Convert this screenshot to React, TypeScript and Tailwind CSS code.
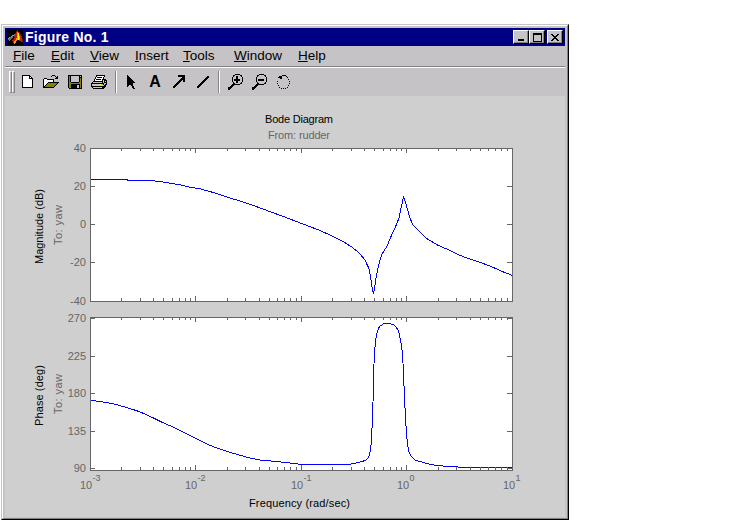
import React from 'react';

const PALETTE: Record<string, string> = {
  k: '#000000',
  w: '#ffffff',
  g: '#848284',
  l: '#c6c3c6',
  o: '#848200',
  y: '#ffff9c',
  Y: '#ffff00',
  r: '#c62000',
  d: '#7b1000',
  a: '#ff9a00',
  b: '#5a7184',
  c: '#94a6ad',
};

const MATLAB = [
  'kkkkkkkkkkkkkkkk',
  'kkkkkkkkkkdkkkkk',
  'kkkkkkkkkdrkkkkk',
  'kkkkkkkkkrardkkk',
  'kkkkkkkkdraYrkkk',
  'kkkkkkkbrraYrdkk',
  'kkkkkccbrraYrrkk',
  'kkkkcbkdrraYarrk',
  'kkcbbbkdrraYardk',
  'kcbbbkkrraaYarrk',
  'kbbbkkdrraaYarrd',
  'kkbkkrrraakkrrrd',
  'kkkkkkraakkkkkrd',
  'kkkkkkraakkkkkkk',
  'kkkkkkkakkkkkkkk',
  'kkkkkkkkkkkkkkkk',
];

const NEW_FILE = [
  'kkkkkkkk...',
  'kwwwwwwkk..',
  'kwwwwwwkwk.',
  'kwwwwwwkkkk',
  'kwwwwwwwwwk',
  'kwwwwwwwwwk',
  'kwwwwwwwwwk',
  'kwwwwwwwwwk',
  'kwwwwwwwwwk',
  'kwwwwwwwwwk',
  'kwwwwwwwwwk',
  'kwwwwwwwwwk',
  'kkkkkkkkkkk',
];

const OPEN_FILE = [
  '.........kkk....',
  '........k...k.k.',
  '.............kk.',
  '.kkk........kkk.',
  'kywykkkkkkk.....',
  'kwywywywywk.....',
  'kywywywywyk.....',
  'kwywykkkkkkkkkkk',
  'kywykoooooooook.',
  'kwykoooooooook..',
  'kykoooooooook...',
  'kkoooooooook....',
  'kkkkkkkkkkk.....',
];

const SAVE = [
  'kkkkkkkkkkkkkk',
  'kokllllllllklk',
  'kokllllllllkkk',
  'kokllllllllkok',
  'kokllllllllkok',
  'kokllllllllkok',
  'kokllllllllkok',
  'kookkkkkkkkook',
  'kooooooooooook',
  'kookkkkkkkkkok',
  'kookkkkkkllkok',
  'kookkkkkkllkok',
  'kookkkkkkllkok',
  '.kkkkkkkkkkkkk',
];

const PRINT = [
  '.....kkkkkkkkk..',
  '.....kwwwwwwwk..',
  '....kwkkkkkwk...',
  '....kwwwwwwwk...',
  '...kwkkkkkwkkkk.',
  '...kwwwwwwwklkkk',
  '..kkkkkkkkkklklk',
  '.klllllllllklkkk',
  'kkkkkkkkkkkkkllk',
  'klllllllYYllklkk',
  'kllllllllllllkk.',
  'kkkkkkkkkkkkkkk.',
  '.klllllllllkkk..',
  '..kkkkkkkkkkk...',
];

const POINTER = [
  'k.......',
  'kk......',
  'kkk.....',
  'kkkk....',
  'kkkkk...',
  'kkkkkk..',
  'kkkkkkk.',
  'kkkkkkkk',
  'kkkkkk..',
  'kkkkkk..',
  'kk..kk..',
  'k....kk.',
  '.....kk.',
  '......kk',
];

const ARROW = [
  '.....kkkkkkk',
  '.....kkkkkkk',
  '.........kkk',
  '........kkkk',
  '.......kkkkk',
  '......kkk.kk',
  '.....kkk..kk',
  '....kkk.....',
  '...kkk......',
  '..kkk.......',
  '.kkk........',
  'kkk.........',
  'kk..........',
];

const LINE = [
  '..........kk',
  '.........kkk',
  '........kkk.',
  '.......kkk..',
  '......kkk...',
  '.....kkk....',
  '....kkk.....',
  '...kkk......',
  '..kkk.......',
  '.kkk........',
  'kkk.........',
  'kk..........',
];

const ZOOM_IN = [
  '.......kkkkk...',
  '.....kk.....kk.',
  '.....k..kk...k.',
  '....k...kk....k',
  '....k...kk....k',
  '....k.kkkkkk..k',
  '....k.kkkkkk..k',
  '....k...kk....k',
  '.....k..kk...k.',
  '.....kk.....kk.',
  '....kkkkkkkk...',
  '...kkk.........',
  '..kkk..........',
  'kkkk...........',
  'kkk............',
  'kk.............',
];

const ZOOM_OUT = [
  '.......kkkkk...',
  '.....kk.....kk.',
  '.....k.......k.',
  '....k.........k',
  '....k.........k',
  '....k.kkkkkk..k',
  '....k.kkkkkk..k',
  '....k.........k',
  '.....k.......k.',
  '.....kk.....kk.',
  '....kkkkkkkk...',
  '...kkk.........',
  '..kkk..........',
  'kkkk...........',
  'kkk............',
  'kk.............',
];

const ROTATE = [
  '.....kkkk....',
  '..kkk....k...',
  '.kkkk.....k..',
  '...kk........',
  '...........k.',
  '.............',
  'k...........k',
  '.............',
  'k...........k',
  '.............',
  '.k.........k.',
  '.............',
  '..k.......k..',
  '....k.k.k....',
];

const MINIMIZE = ['......', '......', '......', '......', '......', '......', 'kkkkkk', 'kkkkkk'];

const MAXIMIZE = [
  'kkkkkkkkk',
  'kkkkkkkkk',
  'k.......k',
  'k.......k',
  'k.......k',
  'k.......k',
  'k.......k',
  'k.......k',
  'kkkkkkkkk',
];

const CLOSE = ['kk....kk', '.kk..kk.', '..kkkk..', '...kk...', '..kkkk..', '.kk..kk.', 'kk....kk'];

const PixelIcon: React.FC<{ rows: string[] }> = ({ rows }) => (
  <svg width={rows[0].length} height={rows.length} shapeRendering="crispEdges" className="block shrink-0">
    {rows.map((row, y) =>
      [...row].map((c, x) =>
        c === '.' ? null : <rect key={`${x}-${y}`} x={x} y={y} width={1} height={1} fill={PALETTE[c]} />
      )
    )}
  </svg>
);

const ToolButton: React.FC<{ label: string; children: React.ReactNode }> = ({ label, children }) => (
  <button aria-label={label} className="flex h-6 w-6 items-center justify-center">
    {children}
  </button>
);

const ToolSeparator: React.FC = () => <div className="h-[22px] w-0.5 border-l border-r border-l-[#848284] border-r-white" />;

const WindowButton: React.FC<{ label: string; children: React.ReactNode }> = ({ label, children }) => (
  <button
    aria-label={label}
    className="flex h-3.5 w-4 items-center justify-center border border-t-white border-r-black border-b-black border-l-white bg-[#c6c3c6] shadow-[inset_-1px_-1px_0_#848284]"
  >
    {children}
  </button>
);

const MENUS = ['File', 'Edit', 'View', 'Insert', 'Tools', 'Window', 'Help'];

// plot geometry, in window coordinates
const LEFT = 90;
const RIGHT = 512;
const DECADE = (RIGHT - LEFT) / 4;

const MAGNITUDE =
  '90,179.5 127,179.5 128,180.5 149,180.5 160,181.5 168,182.8 180,184.8 190,187.3 200,188.8 215,193 230,198 240,201 256.7,206.7 273,212.7 290,219 303,224 318,229.7 333,236.3 345,242.7 351.7,247 359,252.7 365,260 369,268.7 370.7,278 372,287 373.5,293.7 374.5,289 376,278 378.3,266.7 380,260 382,254 386.7,246.7 391.7,235 396.7,224 399,218 401,208 403.5,197.2 405.3,201.7 407.7,210 409.7,217.7 413,224.7 418,230.3 427,238.7 438,245.3 446.7,249 456.7,254 466.7,258 480,262.3 493,267.3 501.7,271.3 512,275.3';

const PHASE =
  '90,400.4 100,401.5 108,402.7 116.7,404.7 128,408 136.7,410.7 145,414 155,418.7 163,422.7 173,427 183,432 195,438 206.7,444 216.7,448 226.7,451.3 238,454.7 250,458 260,460 278,461.7 290,463 301.7,464.4 349,464.4 356,463 361.7,461.7 366.7,459.7 369.3,455.7 370.7,448 371.7,438 372.3,420 372.8,413 373.5,375 374.5,353 375.7,340 377.3,332 379.3,326.7 383.3,323.9 389,323.4 394,325 397.3,328.7 399,332.7 401,343 402.5,353 403.5,373 404.5,398 405.5,416.7 406.5,435 407.7,445 409,452 411.7,457 415,460 421.7,462 431.7,464.7 443,466 463,467.3 512,467.5';

interface PlotProps {
  top: number;
  bottom: number;
  ticks: [string, number][];
  curve: string;
}

const Plot: React.FC<PlotProps> = ({ top, bottom, ticks, curve }) => {
  const minor: number[] = [];
  for (let d = 0; d < 4; d++) {
    for (let n = 2; n < 10; n++) minor.push(Math.floor(LEFT + DECADE * (d + Math.log10(n))) + 0.5);
  }
  const major = [1, 2, 3].map((d) => Math.floor(LEFT + DECADE * d) + 0.5);

  return (
    <g>
      <rect x={LEFT} y={top} width={RIGHT - LEFT + 1} height={bottom - top + 1} fill="#fff" />
      <polyline points={curve} fill="none" stroke="#0000ff" shapeRendering="crispEdges" />
      <g stroke="#666" fill="none" shapeRendering="crispEdges">
        <rect x={LEFT + 0.5} y={top + 0.5} width={RIGHT - LEFT} height={bottom - top} />
        {minor.map((x) => (
          <path key={x} d={`M${x} ${top}v3M${x} ${bottom + 1}v-4`} />
        ))}
        {major.map((x) => (
          <path key={x} d={`M${x} ${top}v5M${x} ${bottom + 1}v-6`} />
        ))}
        {ticks.map(([label, y]) => (
          <path key={label} d={`M${LEFT} ${y + 0.5}h5M${RIGHT + 1} ${y + 0.5}h-6`} />
        ))}
      </g>
      {ticks.map(([label, y]) => (
        <text key={label} x={86} y={y + 4} textAnchor="end" fill="#666">
          {label}
        </text>
      ))}
    </g>
  );
};

const EXPONENTS: [string, number][] = [
  ['-3', 80],
  ['-2', 185],
  ['-1', 291],
  ['0', 397],
  ['1', 503],
];

const BodeDiagram: React.FC = () => (
  <svg viewBox="5 96 560 421" width={560} height={421} fontSize={11} className="block bg-[#cfcfcf]">
    <text x={265} y={123} textLength={68}>Bode Diagram</text>
    <text x={268} y={139} textLength={62} fill="#666">From: rudder</text>

    <Plot
      top={148}
      bottom={301}
      ticks={[['40', 148], ['20', 186], ['0', 224], ['-20', 262], ['-40', 301]]}
      curve={MAGNITUDE}
    />
    <Plot
      top={317}
      bottom={470}
      ticks={[['270', 318], ['225', 356], ['180', 393], ['135', 431], ['90', 468]]}
      curve={PHASE}
    />

    <text transform="translate(43 264) rotate(-90)" textLength={75}>Magnitude (dB)</text>
    <text transform="translate(62 245) rotate(-90)" textLength={40} fill="#666">To: yaw</text>
    <text transform="translate(43 426) rotate(-90)" textLength={61}>Phase (deg)</text>
    <text transform="translate(62 414) rotate(-90)" textLength={40} fill="#666">To: yaw</text>

    {EXPONENTS.map(([exp, x]) => (
      <text key={exp} x={x} y={489} fill="#666">
        10
        <tspan x={x + 12.5} y={481} fontSize={9}>{exp}</tspan>
      </text>
    ))}
    <text x={249} y={507} textLength={101}>Frequency (rad/sec)</text>
  </svg>
);

const App: React.FC = () => (
  <div className="h-[525px] w-[750px] overflow-hidden bg-white pt-6 pl-px font-['Liberation_Sans',Arial,sans-serif] text-black">
    <div className="h-[496px] w-[568px] border border-t-[#c6c3c6] border-r-black border-b-black border-l-[#c6c3c6] bg-[#c6c3c6]">
      <div className="h-[494px] w-[566px] border border-t-white border-r-[#848284] border-b-[#848284] border-l-white px-0.5 pt-0.5">
        <div className="flex h-[18px] items-center bg-[#000084] pr-0.5 pl-0.5">
          <PixelIcon rows={MATLAB} />
          <span className="ml-0.5 flex-1 text-[14px] leading-[18px] font-bold tracking-[0.25px] whitespace-nowrap text-white">Figure No. 1</span>
          <WindowButton label="Minimize">
            <PixelIcon rows={MINIMIZE} />
          </WindowButton>
          <WindowButton label="Maximize">
            <PixelIcon rows={MAXIMIZE} />
          </WindowButton>
          <div className="w-0.5" />
          <WindowButton label="Close">
            <PixelIcon rows={CLOSE} />
          </WindowButton>
        </div>

        <div className="grid h-5 grid-cols-[38px_39px_45px_48px_51px_64px_auto] pl-2 text-[13.5px] leading-[20px]">
          {MENUS.map((menu) => (
            <span key={menu}>
              <span className="underline decoration-1 underline-offset-1">{menu[0]}</span>
              {menu.slice(1)}
            </span>
          ))}
        </div>

        <div className="flex h-[30px] items-center border-t border-[#848284] shadow-[inset_0_1px_0_#fff]">
          <div className="ml-1 flex h-[22px]">
            <div className="w-[3px] border border-t-white border-r-[#848284] border-b-[#848284] border-l-white" />
            <div className="w-[3px] border border-t-white border-r-[#848284] border-b-[#848284] border-l-white" />
          </div>
          <ToolButton label="New"><PixelIcon rows={NEW_FILE} /></ToolButton>
          <ToolButton label="Open"><PixelIcon rows={OPEN_FILE} /></ToolButton>
          <ToolButton label="Save"><PixelIcon rows={SAVE} /></ToolButton>
          <ToolButton label="Print"><PixelIcon rows={PRINT} /></ToolButton>
          <div className="mr-0.5 ml-1"><ToolSeparator /></div>
          <ToolButton label="Select"><PixelIcon rows={POINTER} /></ToolButton>
          <ToolButton label="Text"><span className="text-[16px] leading-4 font-bold">A</span></ToolButton>
          <ToolButton label="Arrow"><PixelIcon rows={ARROW} /></ToolButton>
          <ToolButton label="Line"><PixelIcon rows={LINE} /></ToolButton>
          <div className="mr-[3px] ml-[3px]"><ToolSeparator /></div>
          <ToolButton label="Zoom in"><PixelIcon rows={ZOOM_IN} /></ToolButton>
          <ToolButton label="Zoom out"><PixelIcon rows={ZOOM_OUT} /></ToolButton>
          <ToolButton label="Rotate"><PixelIcon rows={ROTATE} /></ToolButton>
        </div>

        <BodeDiagram />
      </div>
    </div>
  </div>
);

export default App;
